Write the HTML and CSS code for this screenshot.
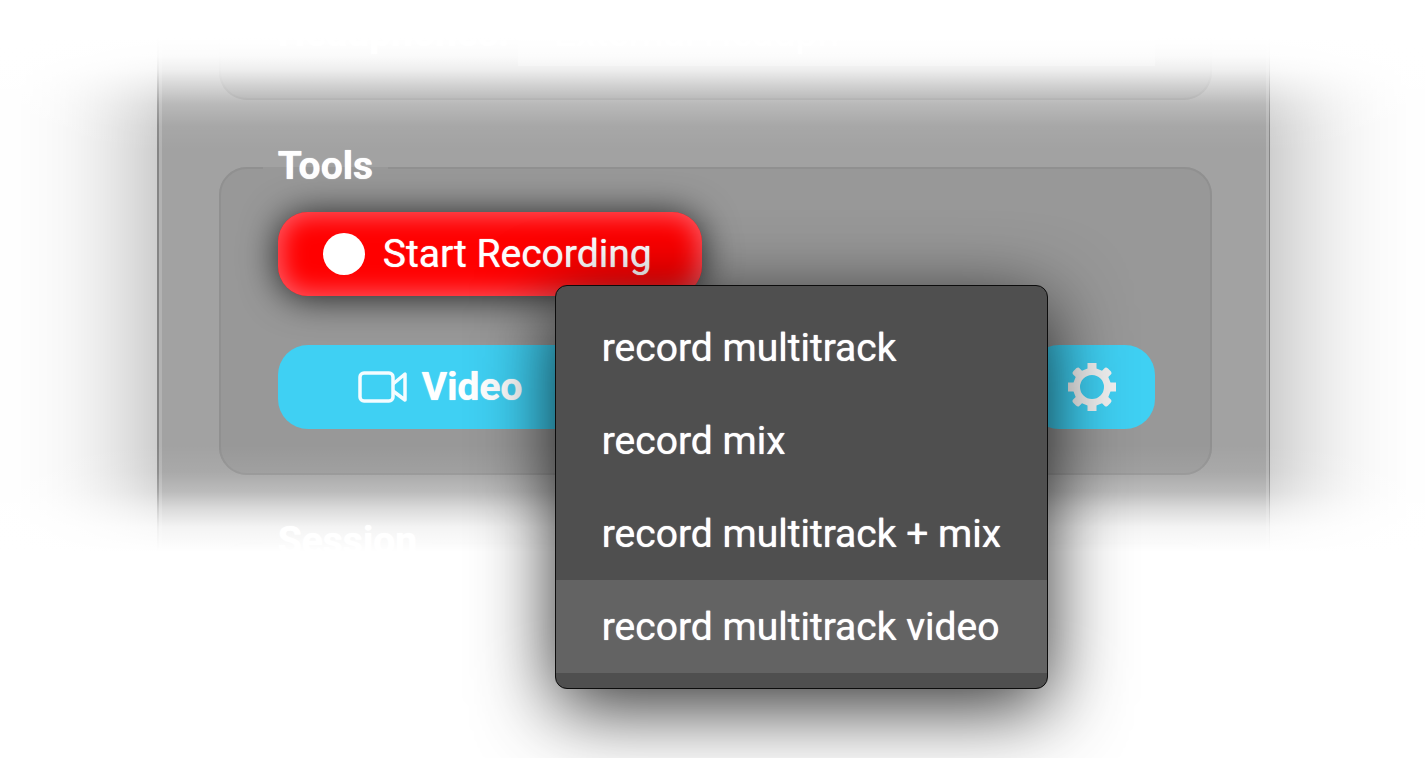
FILE: index.html
```html
<!DOCTYPE html>
<html lang="en">
<head>
<meta charset="utf-8">
<title>Recording tools</title>
<link rel="stylesheet" href="styles.css">
</head>
<body>
<main class="stage">
  <div class="panel">
    <fieldset class="group group-devices">
      <div class="device-row">
        <label class="device-label" for="output">Headphones:</label>
        <select class="device-select" id="output"><option>External Headph</option></select>
      </div>
    </fieldset>

    <fieldset class="group">
      <legend class="group-title">Tools</legend>
      <div class="tools">
        <div class="record">
          <button class="button button-record" type="button" aria-haspopup="menu" aria-expanded="true">
            <svg class="icon-dot" viewBox="0 0 42 42" aria-hidden="true"><circle cx="21" cy="21" r="21"/></svg>
            Start Recording
          </button>
          <div class="menu" role="menu">
            <button class="menu-item" type="button" role="menuitem">record multitrack</button>
            <button class="menu-item" type="button" role="menuitem">record mix</button>
            <button class="menu-item" type="button" role="menuitem">record multitrack + mix</button>
            <button class="menu-item is-active" type="button" role="menuitem">record multitrack video</button>
          </div>
        </div>
        <div class="video-row">
          <button class="button button-video" type="button">
            <svg class="icon-camera" viewBox="0 0 50 32" aria-hidden="true"><rect x="2" y="2" width="33" height="28" rx="4"/><path d="M35 13 47 3V29L35 20"/></svg>
            Video
          </button>
          <button class="button button-settings" type="button" aria-label="Video settings">
            <svg class="icon-gear" viewBox="-24 -24 48 48" aria-hidden="true">
              <path fill-rule="evenodd" d="M-4.500-24H4.500V-18.500L10-16.300 13-19.300Q14.500-20 16-18.500L19-15.500Q20-14 19.300-13L16.300-10 18.500-4.500H24V4.500H18.500L16.300 10 19.300 13Q20 14.500 18.500 16L15.500 19Q14 20 13 19.300L10 16.300 4.500 18.500V24H-4.500V18.500L-10 16.300-13 19.300Q-14.500 20-16 18.500L-19 15.500Q-20 14-19.300 13L-16.300 10-18.500 4.500H-24V-4.500H-18.500L-16.300-10-19.300-13Q-20-14.500-18.500-16L-15.500-19Q-14-20-13-19.300L-10-16.300-4.500-18.500ZM12 0A12 12 0 1 0-12 0 12 12 0 1 0 12 0Z"/>
            </svg>
          </button>
        </div>
      </div>
    </fieldset>

    <fieldset class="group">
      <legend class="group-title">Session</legend>
    </fieldset>
  </div>
</main>
</body>
</html>
```

FILE: styles.css
```css
* {
  box-sizing: border-box;
}

body {
  margin: 0;
  background: #fff;
  color: #fff;
  font-family: Roboto, "Liberation Sans", sans-serif;
  font-size: 39px;
  line-height: 44px;
  text-shadow: 0 0 1px #fff;
}

button,
select {
  font: inherit;
  color: inherit;
  text-shadow: inherit;
}

.stage {
  position: relative;
  height: 100vh;
  padding: 0 10.9% 0 11%;
  overflow: hidden;
}

/* The panel fades to white above and below the tools group. */
.stage::before {
  content: "";
  position: absolute;
  inset: 0;
  z-index: 1;
  pointer-events: none;
  background: linear-gradient(
    #fff 38px,
    rgba(255, 255, 255, 0.96) 56px,
    rgba(255, 255, 255, 0.83) 70px,
    rgba(255, 255, 255, 0.55) 86px,
    rgba(255, 255, 255, 0.25) 104px,
    rgba(255, 255, 255, 0.06) 126px,
    rgba(255, 255, 255, 0) 150px,
    rgba(255, 255, 255, 0) 445px,
    rgba(255, 255, 255, 0.08) 472px,
    rgba(255, 255, 255, 0.28) 492px,
    rgba(255, 255, 255, 0.6) 508px,
    rgba(255, 255, 255, 0.88) 527px,
    #fff 552px
  );
}

.panel {
  min-height: 100%;
  padding: 0 57px 0 60px;
  border: solid #858585;
  border-width: 0 1px 0 2px;
  background: #a2a2a2;
  box-shadow: inset 3px 0 #b2b2b2, inset -3px 0 #b2b2b2, 0 0 130px rgba(0, 0, 0, 0.38);
}

.group {
  min-width: 0;
  margin: 0 0 44px;
  padding: 20px 55px 44px 57px;
  border: 2px solid #909090;
  border-radius: 28px;
  background: #989898;
}

.group-devices {
  padding-top: 0;
  padding-bottom: 32px;
  border-top: 0;
  border-radius: 0 0 28px 28px;
}

.device-row {
  display: flex;
  align-items: center;
  gap: 14px;
}

.device-label {
  width: 226px;
  font-weight: 700;
}

.device-select {
  flex: 1;
  min-width: 0;
  height: 66px;
  padding: 0 36px;
  border: 0;
  background: #b8b8b8;
  appearance: none;
}

.group-title {
  margin-left: -15px;
  padding: 0 15px 4px;
  font-weight: 700;
}

.tools {
  display: grid;
  gap: 49px;
}

.record {
  position: relative;
  justify-self: start;
}

.button {
  display: flex;
  align-items: center;
  justify-content: center;
  height: 84px;
  border: 0;
  border-radius: 30px;
  background: #3fd0f3;
}

.button-record {
  gap: 18px;
  padding: 0 50px 0 45px;
  background: #f00;
  box-shadow: inset 0 0 24px 4px #ff5c66, 0 2px 36px rgba(0, 0, 0, 0.8);
}

.icon-dot {
  width: 42px;
  height: 42px;
  fill: #fff;
}

.video-row {
  display: flex;
  justify-content: space-between;
}

.button-video {
  gap: 14px;
  padding: 0 80px;
  font-weight: 700;
}

.icon-camera {
  width: 50px;
  height: 32px;
  fill: none;
  stroke: #f4fcff;
  stroke-width: 3.5;
  stroke-linejoin: round;
}

.button-settings {
  width: 126px;
  padding: 0;
}

.icon-gear {
  width: 48px;
  height: 48px;
  fill: #f2f2f2;
}

.menu {
  position: absolute;
  top: 73px;
  left: 277px;
  z-index: 2;
  display: grid;
  padding: 15px 0;
  border: 1px solid #0c0c0c;
  border-radius: 12px;
  background: #4f4f4f;
  box-shadow: 0 18px 78px rgba(0, 0, 0, 0.82);
}

.menu-item {
  height: 93px;
  padding: 0 46px;
  border: 0;
  background: transparent;
  text-align: left;
  white-space: nowrap;
}

.menu-item.is-active {
  background: #636363;
}
```
